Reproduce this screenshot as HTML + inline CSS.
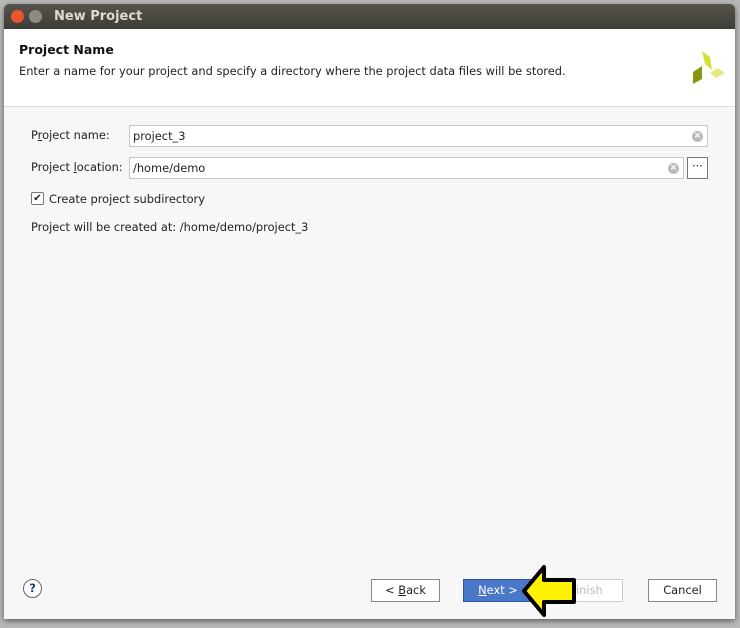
<!DOCTYPE html>
<html><head><style>
*{margin:0;padding:0;box-sizing:border-box}
body{width:740px;height:628px;background:#b8b8b8;position:relative;overflow:hidden;font-family:"DejaVu Sans","Liberation Sans",sans-serif;font-size:11.4px;color:#222}
.win{position:absolute;left:4px;top:4px;width:731px;height:615px;background:#f7f7f7;box-shadow:0 2px 6px rgba(0,0,0,.5);border-radius:5px 5px 0 0;overflow:hidden}
.title{height:25px;background:linear-gradient(#57544c,#3e3c37);color:#dfdbd2;font-weight:bold;font-size:13px;line-height:25px;padding-left:50px;position:relative}
.b{position:absolute;top:6px;width:13px;height:13px;border-radius:50%}
.head{background:#fff;height:78px;border-bottom:1px solid #ddd;position:relative}
.abs{position:absolute}
.field{position:absolute;background:#fff;border:1px solid #c8c8c8;height:22px;line-height:20px;padding-left:3px}
.clr{position:absolute;right:4px;top:5px;width:11px;height:11px;border-radius:50%;background:#bbb;color:#fff;font-size:9px;line-height:11px;text-align:center;font-weight:bold}
.btn{position:absolute;top:575px;height:23px;border:1px solid #888;background:#fff;text-align:center;line-height:21px}
</style></head><body>
<div class="win">
<div class="title"><div class="b" style="left:7px;background:#e8572c"></div><div class="b" style="left:25px;background:#8e8b84"></div>New Project</div>
<div class="head">
<div class="abs" style="left:15px;top:13px;font-weight:bold;font-size:12.5px;color:#111">Project Name</div>
<div class="abs" style="left:15px;top:35px">Enter a name for your project and specify a directory where the project data files will be stored.</div>
<svg class="abs" style="left:686px;top:19px" width="36" height="36"><polygon points="12,3 20,9 22,22 15,16" fill="#d8e033"/><polygon points="20,25 28,20 35,25 26,30" fill="#e3ec7b"/><polygon points="3,24 12,18 12,31 3,36" fill="#8b9410"/></svg>
</div>
<div class="abs" style="left:27px;top:124px">P<u>r</u>oject name:</div>
<div class="field" style="left:125px;top:121px;width:579px">project_3<div class="clr">×</div></div>
<div class="abs" style="left:27px;top:156px">Project <u>l</u>ocation:</div>
<div class="field" style="left:125px;top:153px;width:555px">/home/demo<div class="clr">×</div></div>
<div class="field" style="left:683px;top:153px;width:21px;border-color:#777;padding:0;text-align:center;line-height:16px">···</div>
<div class="abs" style="left:27px;top:188px;width:13px;height:13px;border:1px solid #777;border-radius:2px;background:#fff;font-size:10px;line-height:11px;text-align:center">✔</div>
<div class="abs" style="left:45px;top:188px">Create project subdirectory</div>
<div class="abs" style="left:27px;top:216px">Project will be created at: /home/demo/project_3</div>
<div class="abs" style="left:19px;top:575px;width:19px;height:19px;border:1px solid #666;border-radius:50%;text-align:center;line-height:17px;font-weight:bold;color:#1d3d7a;background:#fff">?</div>
<div class="btn" style="left:367px;width:69px">&lt; <u>B</u>ack</div>
<div class="btn" style="left:459px;width:70px;background:#4a78c9;color:#fff;border-color:#2c57a8"><u>N</u>ext &gt;</div>
<div class="btn" style="left:546px;width:73px;color:#bbb;border-color:#ccc"><u>F</u>inish</div>
<div class="btn" style="left:644px;width:69px">Cancel</div>
</div>
<svg style="position:absolute;left:520px;top:563px" width="58" height="56"><polygon points="4,28 24,4 24,17 54,17 54,39 24,39 24,52" fill="#fff200" stroke="#000" stroke-width="4" stroke-linejoin="round"/></svg>
</body></html>
